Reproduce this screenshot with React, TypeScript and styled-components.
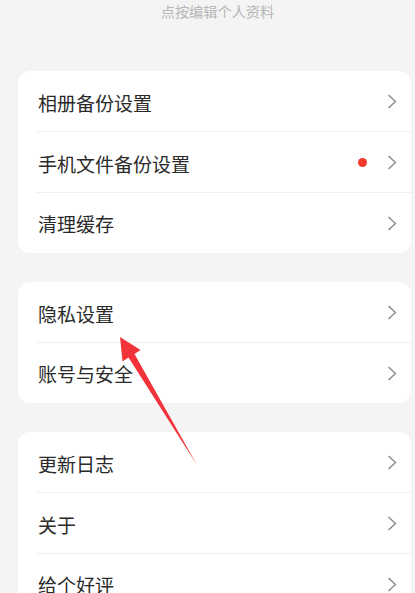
import React from "react";
import styled, { createGlobalStyle } from "styled-components";

const Global = createGlobalStyle`
  html, body { margin: 0; padding: 0; background: #f4f4f4; }
  body { font-family: "Noto Sans CJK SC", "Noto Sans", sans-serif; }
  * { box-sizing: border-box; }
`;

const Page = styled.div`
  position: relative;
  width: 415px;
  height: 593px;
  overflow: hidden;
  background: #f4f4f4;
  padding: 0 4px 0 18px;
  display: flex;
  flex-direction: column;
`;

const Hint = styled.div`
  flex-shrink: 0;
  padding-top: 1px;
  height: 71px;
  text-align: center;
  font-size: 14.2px;
  line-height: 20px;
  color: #b6b6b6;
  padding-left: 6px;
`;

const Groups = styled.div`
  flex-shrink: 0;
  display: flex;
  flex-direction: column;
  gap: 29px;
`;

const Card = styled.div`
  flex-shrink: 0;
  background: #ffffff;
  border-radius: 12px;
  display: flex;
  flex-direction: column;
`;

const Row = styled.div<{ $divider: boolean }>`
  flex-shrink: 0;
  height: ${(p) => (p.$divider ? 61 : 60)}px;
  display: flex;
  align-items: center;
  padding: 0 14px 0 20px;
  position: relative;
  ${(p) =>
    p.$divider
      ? `&::after {
    content: "";
    position: absolute;
    left: 19px;
    right: 0;
    bottom: 0;
    height: 1px;
    background: #efefef;
  }`
      : ""}
`;

const Label = styled.span`
  flex: 1;
  font-size: 19px;
  color: #2a2a2a;
  line-height: 1;
  padding-top: 1px;
`;

const Dot = styled.span`
  width: 9px;
  height: 9px;
  border-radius: 50%;
  background: #f23a2c;
  margin-right: 20px;
`;

const Chevron = () => (
  <svg width="10" height="15" viewBox="0 0 10 15" fill="none">
    <path d="M1.5 1 L8.5 7.5 L1.5 14" stroke="#8a8a8a" strokeWidth="1.4" strokeLinejoin="miter" />
  </svg>
);

const ArrowLayer = styled.svg`
  position: absolute;
  left: 0;
  top: 0;
  width: 415px;
  height: 593px;
  pointer-events: none;
`;

type Item = { label: string; dot?: boolean };

const groups: Item[][] = [
  [{ label: "相册备份设置" }, { label: "手机文件备份设置", dot: true }, { label: "清理缓存" }],
  [{ label: "隐私设置" }, { label: "账号与安全" }],
  [{ label: "更新日志" }, { label: "关于" }, { label: "给个好评" }],
];

export default function App() {
  return (
    <>
      <Global />
      <Page>
        <Hint>点按编辑个人资料</Hint>
        <Groups>
          {groups.map((g, gi) => (
            <Card key={gi}>
              {g.map((it, i) => (
                <Row key={it.label} $divider={i < g.length - 1}>
                  <Label>{it.label}</Label>
                  {it.dot && <Dot />}
                  <Chevron />
                </Row>
              ))}
            </Card>
          ))}
        </Groups>
        <ArrowLayer viewBox="0 0 415 593">
          <polygon
            points="120,337 140.5,350 134.5,354 197,465 128.5,357.5 122.5,361.5"
            fill="#f2343a"
          />
        </ArrowLayer>
      </Page>
    </>
  );
}
